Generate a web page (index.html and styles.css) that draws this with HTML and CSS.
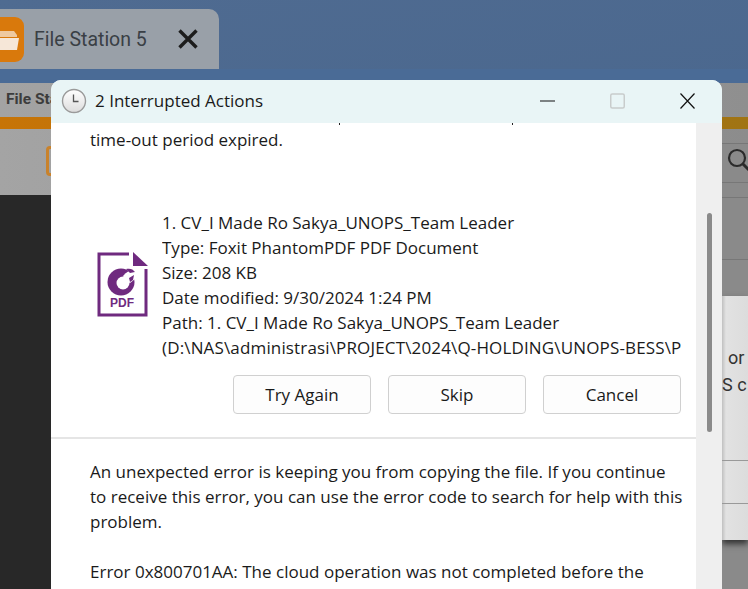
FILE: index.html
```html
<!DOCTYPE html>
<html lang="en">
<head>
<meta charset="utf-8">
<title>2 Interrupted Actions</title>
<link rel="stylesheet" href="styles.css">
</head>
<body>
<div class="desktop">
  <div class="tab">
    <span class="tab-icon"><svg width="24" height="45" viewBox="0 0 24 45"><path d="M0 14h14l3 4v2H0z" fill="#eec9a0"/><path d="M0 21h19l-2 12H0z" fill="#f6e7d8"/></svg></span>
    <span class="tab-title">File Station 5</span>
    <svg class="tab-close" width="20" height="20" viewBox="0 0 20 20"><path d="M1.500 1.500l17 17M18.500 1.500l-17 17" stroke="#1c1c1c" stroke-width="3.400" fill="none"/></svg>
  </div>
  <div class="back-window">
    <div class="back-title">File Station 5</div>
    <div class="back-orange"></div>
    <div class="back-tools">
      <span class="back-folder"></span>
    </div>
    <div class="back-dark"></div>
    <div class="back-right"></div>
    <svg class="back-search" width="28" height="28" viewBox="0 0 28 28"><circle cx="12" cy="12" r="8" stroke="#2b2b2b" stroke-width="2.200" fill="none"/><path d="M18 18l6 6" stroke="#2b2b2b" stroke-width="3" fill="none"/></svg>
    <div class="back-dialog">
      <p class="back-text">or</p>
      <p class="back-text back-text-two">S c</p>
      <div class="back-rows"></div>
    </div>
  </div>

  <section class="dialog">
    <header class="titlebar">
      <svg class="clock" width="26" height="26" viewBox="0 0 26 26"><defs><linearGradient id="cg" x1="0" y1="0" x2="0" y2="1"><stop offset="0" stop-color="#ffffff"/><stop offset="1" stop-color="#dcdcdc"/></linearGradient></defs><circle cx="13" cy="13" r="11.500" fill="url(#cg)" stroke="#9a9a9a" stroke-width="1.400"/><path d="M12.500 6.500v7h5" stroke="#555" stroke-width="1.300" fill="none"/></svg>
      <h1 class="title">2 Interrupted Actions</h1>
      <div class="controls">
        <svg class="ctrl" width="15" height="16" viewBox="0 0 15 16"><path d="M0 8h15" stroke="#111" stroke-width="1.200"/></svg>
        <svg class="ctrl" width="15" height="16" viewBox="0 0 15 16"><rect x=".75" y="1" width="13.500" height="14" rx="1.500" stroke="#c8cccc" stroke-width="1.500" fill="none"/></svg>
        <svg class="ctrl" width="15" height="16" viewBox="0 0 15 16"><path d="M.5.500l14 15M14.500.500l-14 15" stroke="#111" stroke-width="1.200" fill="none"/></svg>
      </div>
    </header>
    <div class="body">
      <i class="tick tick-one"></i>
      <i class="tick tick-two"></i>
      <div class="content">
        <p class="expired">time-out period expired.</p>
        <div class="file">
          <svg class="pdf" width="52" height="66" viewBox="0 0 52 66">
            <path d="M32 2H2v61h47V17" stroke="#6f2a7f" stroke-width="3" fill="none"/>
            <path d="M36 0l15 14H36z" fill="#6f2a7f"/>
            <circle cx="24" cy="30" r="13.500" fill="#6f2a7f"/>
            <circle cx="26" cy="31" r="6.500" fill="#fff"/>
            <path d="M26 24c5-6 10-7 14-5l-2 8-5 4-4-2z" fill="#fff"/>
            <path d="M29 17c4-1 7 0 9 3l-5 1zM32 26l5-3-1 5-3 2z" fill="#6f2a7f"/>
            <text x="25" y="55" class="pdf-label">PDF</text>
          </svg>
          <div class="meta">
            <div>1. CV_I Made Ro Sakya_UNOPS_Team Leader</div>
            <div>Type: Foxit PhantomPDF PDF Document</div>
            <div>Size: 208 KB</div>
            <div>Date modified: 9/30/2024 1:24 PM</div>
            <div>Path: 1. CV_I Made Ro Sakya_UNOPS_Team Leader</div>
            <div class="path">(D:\NAS\administrasi\PROJECT\2024\Q-HOLDING\UNOPS-BESS\P</div>
          </div>
        </div>
        <div class="buttons">
          <button class="btn">Try Again</button>
          <button class="btn">Skip</button>
          <button class="btn">Cancel</button>
        </div>
        <hr class="rule">
        <div class="message">
          <p>An unexpected error is keeping you from copying the file. If you continue<br>to receive this error, you can use the error code to search for help with this<br>problem.</p>
          <p>Error 0x800701AA: The cloud operation was not completed before the</p>
        </div>
      </div>
      <div class="scrollbar"><div class="thumb"></div></div>
    </div>
  </section>
</div>
</body>
</html>
```
FILE: styles.css
```css
* { box-sizing: border-box; }
html, body { margin: 0; padding: 0; }
body { width: 748px; height: 589px; overflow: hidden; font-family: "Open Sans", "Noto Sans", sans-serif; }
.desktop { position: relative; width: 748px; height: 589px; overflow: hidden; background: linear-gradient(170deg, #4f6b91 0%, #46648b 70%); }

.tab { position: absolute; left: -20px; top: 9px; width: 239px; height: 60px; background: #99a0a8; border-radius: 0 10px 0 0; display: flex; align-items: center; padding-left: 20px; }
.tab-icon { width: 24px; height: 45px; background: #d9790c; border-radius: 0 9px 9px 0; display: block; flex: none; overflow: hidden; }
.tab-title { margin-left: 10px; font: 19.500px Roboto, sans-serif; color: #3a3f45; width: 144px; }
.tab-close { flex: none; }

.back-window { position: absolute; left: 0; top: 69px; width: 748px; height: 520px; background: #4a6b96; }
.back-title { position: absolute; left: 0; top: 14px; width: 748px; height: 34px; padding: 7px 0 0 6px; background: linear-gradient(90deg, #a3a3a3, #8f8f8f); font: bold 15.500px Roboto, sans-serif; color: #3c3c3c; }
.back-orange { position: absolute; left: 0; top: 48px; width: 748px; height: 12px; background: linear-gradient(90deg, #c77407, #a07414); }
.back-tools { position: absolute; left: 0; top: 60px; width: 748px; height: 66px; background: linear-gradient(90deg, #a4a4a4, #8c8c8c); }
.back-folder { position: absolute; left: 46px; top: 17px; width: 20px; height: 30px; border: 3px solid #c9822b; border-radius: 4px; }
.back-search { position: absolute; left: 725px; top: 77px; }
.back-dark { position: absolute; left: 0; top: 126px; width: 60px; height: 394px; background: #282828; }
.back-right { position: absolute; left: 722px; top: 74px; width: 26px; height: 446px; background: #8a8a8a; }
.back-right::before { content: ""; display: block; height: 38px; border-top: 1px solid #777; border-bottom: 1px solid #777; }
.back-right::after { content: ""; display: block; height: 61px; margin-top: 14px; border-top: 1px solid #777; border-bottom: 1px solid #777; }
.back-dialog { position: absolute; left: 722px; top: 227px; width: 26px; height: 244px; background: linear-gradient(90deg, #c0c0c0 0, #e2e2e2 4px, #dcdcdc); box-shadow: 0 4px 6px #333; }
.back-text { position: absolute; left: 6px; top: 51px; margin: 0; font: 18px Roboto, sans-serif; color: #333; white-space: nowrap; }
.back-text-two { left: 0; top: 78px; }
.back-rows { position: absolute; left: 0; top: 164px; width: 26px; height: 44px; border-top: 1px solid #999; border-bottom: 1px solid #999; }

.dialog { position: absolute; left: 51px; top: 80px; width: 671px; height: 509px; background: #fff; border-radius: 10px 10px 0 0; display: flex; flex-direction: column; overflow: hidden; }
.titlebar { height: 43px; flex: none; background: #e9f5f6; display: flex; align-items: center; padding: 0 0 2px 10px; }
.clock { flex: none; }
.title { margin: 0 0 0 8px; font: 400 17px "Open Sans", sans-serif; color: #1a1a1a; flex: 1; }
.controls { display: flex; gap: 55px; padding-right: 27px; align-items: center; }
.ctrl { display: block; }

.body { position: relative; flex: 1; display: flex; min-height: 0; }
.tick { position: absolute; top: 0; width: 1px; height: 2px; background: #222; }
.tick-one { left: 288px; }
.tick-two { left: 461px; }
.content { width: 645px; flex: none; font-size: 17px; color: #1a1a1a; min-width: 0; }
.expired { margin: 4px 0 0 39px; line-height: 25px; }
.file { display: flex; margin: 58px 14px 0 46px; align-items: center; overflow: hidden; }
.pdf { flex: none; }
.pdf-label { font: bold 12px "Liberation Sans", sans-serif; fill: #6f2a7f; text-anchor: middle; }
.meta { margin-left: 13px; line-height: 25px; white-space: nowrap; overflow: hidden; min-width: 0; flex: 1; }
.path { overflow: hidden; letter-spacing: .15px; }
.buttons { display: flex; gap: 17px; justify-content: flex-end; margin: 15px 15px 0 0; }
.btn { width: 138px; height: 39px; padding: 0; background: #fdfdfd; border: 1px solid #d0d0d0; border-radius: 4px; font: inherit; color: #1a1a1a; }
.rule { margin: 23px 0 0; border: 0; border-top: 2px solid #e5e5e5; }
.message { padding: 20px 0 0 39px; line-height: 25px; white-space: nowrap; }
.message p { margin: 0 0 25px; }

.scrollbar { flex: 1; background: #efefef; padding: 90px 0 0 11px; }
.thumb { width: 5px; height: 219px; background: #8a8a8a; border-radius: 3px; }
```
